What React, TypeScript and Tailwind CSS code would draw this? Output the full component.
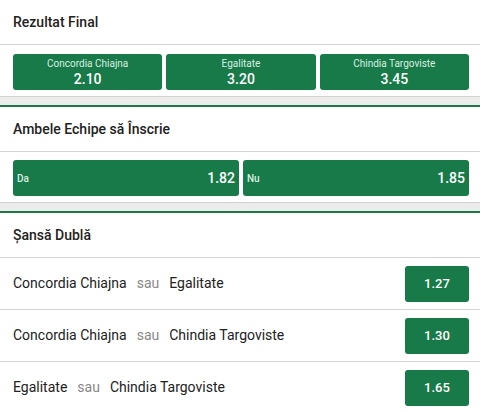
import React from 'react';

const font = { fontFamily: 'Roboto, "Noto Sans", sans-serif' };

type Odd = { label: string; value: string };

const finalOdds: Odd[] = [
  { label: 'Concordia Chiajna', value: '2.10' },
  { label: 'Egalitate', value: '3.20' },
  { label: 'Chindia Targoviste', value: '3.45' },
];

const bothScore: Odd[] = [
  { label: 'Da', value: '1.82' },
  { label: 'Nu', value: '1.85' },
];

const doubleChance = [
  { a: 'Concordia Chiajna', b: 'Egalitate', value: '1.27' },
  { a: 'Concordia Chiajna', b: 'Chindia Targoviste', value: '1.30' },
  { a: 'Egalitate', b: 'Chindia Targoviste', value: '1.65' },
];

function MarketHeader({ title }: { title: string }) {
  return (
    <div className="h-[45px] flex items-center pl-[13px] border-b border-[#d4d4d4] text-[14px] font-medium text-[#222]">
      {title}
    </div>
  );
}

function Separator() {
  return <div className="h-[11px] bg-[#ececec] border-t border-[#d2d2d2] border-b-2 border-b-[#1c7847]" />;
}

export default function App() {
  return (
    <div className="w-[480px] bg-white" style={font}>
      <MarketHeader title="Rezultat Final" />
      <div className="grid grid-cols-3 gap-[4px] pl-[13px] pr-[11px] pt-[9px] pb-[6px]">
        {finalOdds.map((o) => (
          <button
            key={o.label}
            className="h-[36px] rounded-[3px] bg-[#187a48] flex flex-col items-center justify-center leading-none"
          >
            <span className="text-[10px] text-[#d9efe1]">{o.label}</span>
            <span className="mt-[3px] text-[14px] font-medium text-white">{o.value}</span>
          </button>
        ))}
      </div>
      <Separator />

      <MarketHeader title="Ambele Echipe să Înscrie" />
      <div className="grid grid-cols-2 gap-[4px] pl-[13px] pr-[11px] pt-[8px] pb-[6px]">
        {bothScore.map((o) => (
          <button
            key={o.label}
            className="h-[36px] rounded-[3px] bg-[#187a48] flex items-center justify-between px-[4px]"
          >
            <span className="text-[10px] font-medium text-[#d9efe1]">{o.label}</span>
            <span className="text-[14px] font-medium text-white">{o.value}</span>
          </button>
        ))}
      </div>
      <Separator />

      <MarketHeader title="Șansă Dublă" />
      {doubleChance.map((r) => (
        <div
          key={r.a + r.b}
          className="h-[52px] flex items-center justify-between pl-[13px] pr-[11px] border-b border-[#d4d4d4]"
        >
          <div className="flex items-center gap-[10px] text-[14px] text-[#222]">
            <span>{r.a}</span>
            <span className="text-[#888]">sau</span>
            <span>{r.b}</span>
          </div>
          <button className="w-[64px] h-[36px] rounded-[3px] bg-[#187a48] text-[13px] font-medium text-white">
            {r.value}
          </button>
        </div>
      ))}
    </div>
  );
}
